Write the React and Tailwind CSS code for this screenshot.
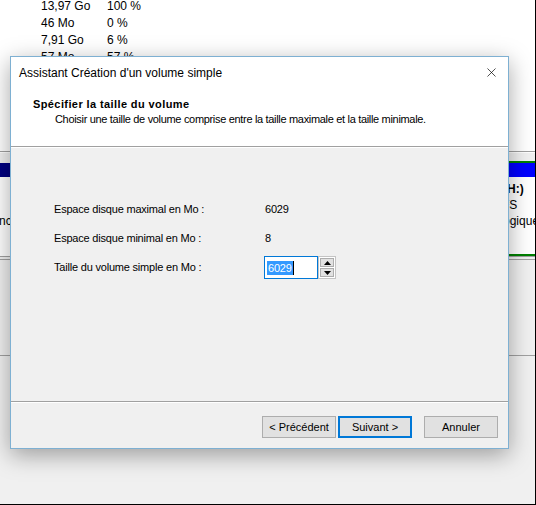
import { X } from "lucide-react";

const volumes = [
  ["13,97 Go", "100 %"],
  ["46 Mo", "0 %"],
  ["7,91 Go", "6 %"],
  ["57 Mo", "57 %"],
];

function WinButton({ children, primary }) {
  return (
    <button
      className={`flex h-[22px] w-[74px] items-center justify-center bg-[#e1e1e1] text-[11px] text-black ${
        primary ? "border-2 border-[#0078d7]" : "border border-[#adadad]"
      }`}
    >
      {children}
    </button>
  );
}

function Spinner() {
  return (
    <div className="flex h-[23px] w-[18px] flex-col gap-[1px] border border-[#c4c4c4] bg-white p-[1px]">
      <div className="flex flex-1 items-center justify-center border border-[#adadad] bg-[#e1e1e1]">
        <svg width="7" height="4" viewBox="0 0 7 4">
          <path d="M3.5 0 L7 4 L0 4 Z" fill="#000" />
        </svg>
      </div>
      <div className="flex flex-1 items-center justify-center border border-[#adadad] bg-[#e1e1e1]">
        <svg width="7" height="4" viewBox="0 0 7 4">
          <path d="M0 0 L7 0 L3.5 4 Z" fill="#000" />
        </svg>
      </div>
    </div>
  );
}

export default function App() {
  return (
    <div className="relative h-[505px] w-[536px] overflow-hidden border-b border-r border-black bg-[#f0f0f0] font-['Liberation_Sans',Arial,sans-serif] text-black">
      {/* Liste des volumes en arrière-plan */}
      <div className="h-[151px] overflow-hidden bg-white">
        <div className="-mt-[3px] flex flex-col text-[12px]">
          {volumes.map(([size, pct]) => (
            <div key={size + pct} className="flex h-[17px] items-center">
              <span className="ml-[41px] w-[66px]">{size}</span>
              <span>{pct}</span>
            </div>
          ))}
        </div>
      </div>
      <div className="h-px bg-[#a0a0a0]" />
      <div className="h-px bg-white" />
      <div className="h-[8px]" />

      {/* Carte des disques */}
      <div className="flex h-[95px]">
        <div className="flex w-[300px] flex-col pt-[2px]">
          <div className="h-[14px] bg-[#000080]" />
          <div className="flex-1 bg-white pt-[35px] text-[12px] whitespace-nowrap">
            <span className="-ml-[93px]">Sain (Partition principale)</span>
          </div>
        </div>
        <div className="ml-auto flex w-[200px] flex-col border-y-[2px] border-[#008000]">
          <div className="h-[14px] bg-[#0000ff]" />
          <div className="flex flex-1 flex-col overflow-hidden bg-white pl-[114px] pt-[4px] text-[12px] leading-[16px] whitespace-nowrap">
            <span className="font-bold">Nouveau (H:)</span>
            <span className="-ml-[9px]">6,03 Go NTFS</span>
            <span className="ml-[8px]">Lecteur logique</span>
          </div>
        </div>
      </div>
      <div className="h-px bg-[#a0a0a0]" />
      <div className="mt-[2px] h-px bg-[#a0a0a0]" />
      <div className="mt-[95px] h-px bg-[#a0a0a0]" />

      {/* Fenêtre de l'assistant */}
      <div className="absolute left-[10px] top-[56px] flex h-[393px] w-[499px] flex-col border border-[#7eb0d2] bg-[#f0f0f0] shadow-[0_6px_22px_rgba(0,0,0,0.35)]">
        <div className="flex h-[31px] items-center justify-between bg-white pl-[8px] pr-[9px] text-[12px]">
          <span>Assistant Création d'un volume simple</span>
          <X size={15} strokeWidth={1.1} className="text-black" />
        </div>
        <div className="flex h-[58px] flex-col bg-white pl-[22px] pt-[9px] text-[11px] leading-[14px]">
          <span className="font-bold tracking-[0.4px]">Spécifier la taille du volume</span>
          <span className="ml-[22px] mt-[1px] tracking-[-0.32px]">
            Choisir une taille de volume comprise entre la taille maximale et la taille minimale.
          </span>
        </div>
        <div className="h-px bg-[#a0a0a0]" />
        <div className="h-px bg-white" />

        <div className="flex flex-1 flex-col pl-[43px] pt-[47px] text-[11px] tracking-[-0.2px]">
          <div className="flex h-[29px] items-center">
            <span className="w-[211px]">Espace disque maximal en Mo :</span>
            <span>6029</span>
          </div>
          <div className="flex h-[29px] items-center">
            <span className="w-[211px]">Espace disque minimal en Mo :</span>
            <span>8</span>
          </div>
          <div className="flex h-[29px] items-center">
            <span className="w-[210px]">Taille du volume simple en Mo :</span>
            <div className="flex h-[23px] w-[54px] items-center border border-[#0078d7] bg-white pl-[2px]">
              <span className="bg-[#3399ff] px-[1px] leading-[14px] text-white">6029</span>
              <span className="h-[14px] w-px bg-black" />
            </div>
            <Spinner />
          </div>
        </div>

        <div className="h-px bg-[#a0a0a0]" />
        <div className="h-px bg-white" />
        <div className="flex h-[45px] items-start pr-[10px] pt-[13px]">
          <div className="ml-auto flex gap-[2px]">
            <WinButton>&lt; Précédent</WinButton>
            <WinButton primary>Suivant &gt;</WinButton>
          </div>
          <div className="ml-[12px]">
            <WinButton>Annuler</WinButton>
          </div>
        </div>
      </div>
    </div>
  );
}
